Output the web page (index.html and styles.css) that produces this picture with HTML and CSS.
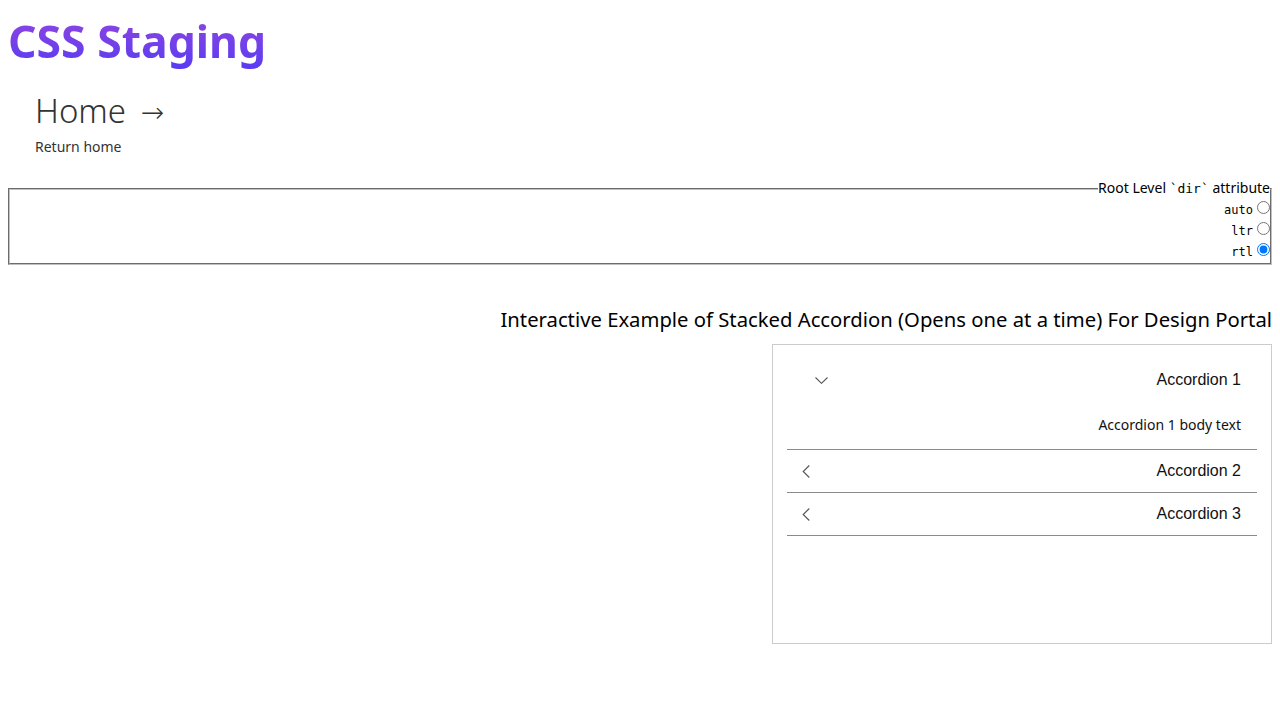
FILE: index.html
```html
<!DOCTYPE html>
<html dir="rtl" lang="en">
<head>
<meta charset="utf-8">
<title>CSS Staging</title>
<link rel="stylesheet" href="styles.css">
</head>
<body>
<header class="site-header" dir="ltr">
  <div class="brand">CSS Staging</div>
  <nav class="home-nav">
    <a class="home-link" href="#">Home <span class="arrow">→</span></a>
    <p class="home-desc">Return home</p>
  </nav>
</header>
<fieldset class="dir-set">
  <legend class="dir-legend">Root Level <code>`dir`</code> attribute</legend>
  <div class="dir-opt"><input type="radio" name="dir" id="d-auto"><label for="d-auto">auto</label></div>
  <div class="dir-opt"><input type="radio" name="dir" id="d-ltr"><label for="d-ltr">ltr</label></div>
  <div class="dir-opt"><input type="radio" name="dir" id="d-rtl" checked><label for="d-rtl">rtl</label></div>
</fieldset>
<section class="demo">
  <h2 class="demo-title">Interactive Example of Stacked Accordion (Opens one at a time) For Design Portal</h2>
  <div class="accordion">
    <div class="acc-item open">
      <div class="acc-head">
        <span class="acc-label">Accordion 1</span>
        <svg class="acc-icon down" width="13" height="7" viewBox="0 0 13 7"><path d="M0.5 0.5 L6.5 6.3 L12.5 0.5" fill="none" stroke="#555" stroke-width="1.1"/></svg>
      </div>
      <div class="acc-body">Accordion 1 body text</div>
    </div>
    <div class="acc-item">
      <div class="acc-head">
        <span class="acc-label">Accordion 2</span>
        <svg class="acc-icon left" width="8" height="13" viewBox="0 0 8 13"><path d="M7.3 0.5 L1.2 6.5 L7.3 12.5" fill="none" stroke="#555" stroke-width="1.1"/></svg>
      </div>
    </div>
    <div class="acc-item">
      <div class="acc-head">
        <span class="acc-label">Accordion 3</span>
        <svg class="acc-icon left" width="8" height="13" viewBox="0 0 8 13"><path d="M7.3 0.5 L1.2 6.5 L7.3 12.5" fill="none" stroke="#555" stroke-width="1.1"/></svg>
      </div>
    </div>
  </div>
</section>
</body>
</html>
```
FILE: styles.css
```css
html { background: #fff; }
body {
  margin: 8px;
  font-family: "Noto Sans", sans-serif;
  color: #000;
}
.site-header { display: block; }
.brand {
  font-family: "Noto Sans", sans-serif;
  font-weight: 700;
  font-size: 44.5px;
  line-height: 66px;
  background: linear-gradient(180deg, #8a44e2 20%, #5a3cf2 90%);
  -webkit-background-clip: text;
  background-clip: text;
  color: transparent;
  display: inline-block;
}
.home-nav { padding: 15px 0 0 27px; }
.home-link {
  font-size: 33px;
  font-weight: 300;
  line-height: 44px;
  color: #333;
  text-decoration: none;
  display: inline-block;
}
.arrow {
  font-family: "Noto Sans", "DejaVu Sans", sans-serif;
  font-size: 28px;
  font-weight: 300;
  margin-left: 6px;
  position: relative;
  top: -1px;
}
.home-desc {
  margin: 3px 0 0;
  font-size: 14px;
  line-height: 20px;
  color: #333;
}
.dir-set {
  margin: 23px 0 0;
  padding: 0 0 3px;
  border: 2px groove rgb(192, 192, 192);
  font-size: 14px;
}
.dir-legend {
  padding: 0;
  font-family: "Noto Sans", sans-serif;
  font-size: 14px;
  line-height: 16px;
}
.dir-legend code {
  font-family: "DejaVu Sans Mono", monospace;
  font-size: 13px;
}
.dir-opt {
  height: 21px;
  display: flex;
  align-items: center;
  justify-content: flex-start;
}
.dir-opt input {
  margin: 0;
  width: 13px;
  height: 13px;
}
.dir-opt label {
  font-family: "DejaVu Sans Mono", monospace;
  font-size: 12px;
  margin-right: 4px;
  margin-top: 4px;
}
.demo { margin-top: 41px; }
.demo-title {
  margin: 0 0 11px;
  font-weight: 400;
  font-size: 20.25px;
  line-height: 27px;
  text-align: right;
}
.accordion {
  width: 470px;
  height: 270px;
  border: 1px solid #ccc;
  padding: 14px;
}
.acc-item { border-bottom: 1px solid #8a8a8a; }
.acc-head {
  height: 42px;
  padding: 0 16px;
  display: flex;
  align-items: center;
  justify-content: space-between;
}
.acc-label {
  font-family: "Liberation Sans", Arial, sans-serif;
  font-size: 16px;
  color: #111;
}
.acc-icon { display: block; }
.acc-icon.down { margin-left: 12px; }
.acc-icon.left { margin-left: -1px; }
.acc-body {
  height: 47px;
  padding: 0 16px 1px;
  display: flex;
  align-items: center;
  font-size: 14px;
  color: #111;
}
```
